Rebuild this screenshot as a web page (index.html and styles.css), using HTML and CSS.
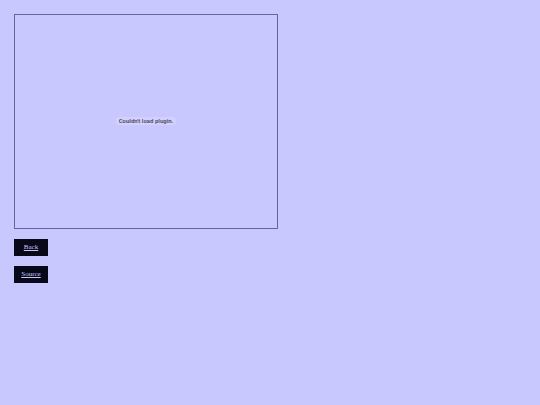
FILE: index.html
```html
<!DOCTYPE html>
<html lang="en">
<head>
    <meta charset="UTF-8">
    <meta name="viewport" content="width=device-width, initial-scale=1.0">
    <title>Applet</title>
    <link rel="stylesheet" href="styles.css">
</head>
<body>
    <div class="plugin">
        <span class="plugin-message">Couldn't load plugin.</span>
    </div>
    <nav class="links">
        <a class="link-button" href="index.html">Back</a>
        <a class="link-button" href="source.html">Source</a>
    </nav>
</body>
</html>
```

FILE: styles.css
```css
body {
    margin: 14px;
    background: #c8c8ff;
    font-family: "Liberation Serif", "Times New Roman", serif;
    font-size: 7px;
}
.plugin {
    display: flex;
    align-items: center;
    justify-content: center;
    box-sizing: border-box;
    max-width: 264px;
    aspect-ratio: 264 / 215;
    padding-bottom: 2px;
    border: 1px solid #6464a0;
}
.plugin-message {
    padding: 0 3px;
    border-radius: 2px;
    background: #d2d0fc;
    color: #55536f;
    font-family: Roboto, "Liberation Sans", sans-serif;
    font-size: 6px;
    font-weight: bold;
    line-height: 8px;
}
.links {
    display: flex;
    flex-direction: column;
    align-items: flex-start;
    gap: 10px;
    margin-top: 10px;
}
.link-button {
    min-width: 34px;
    background: #080818;
    color: #c8c8ff;
    line-height: 17px;
    text-align: center;
}
.link-button:hover {
    background: #282848;
}
```
